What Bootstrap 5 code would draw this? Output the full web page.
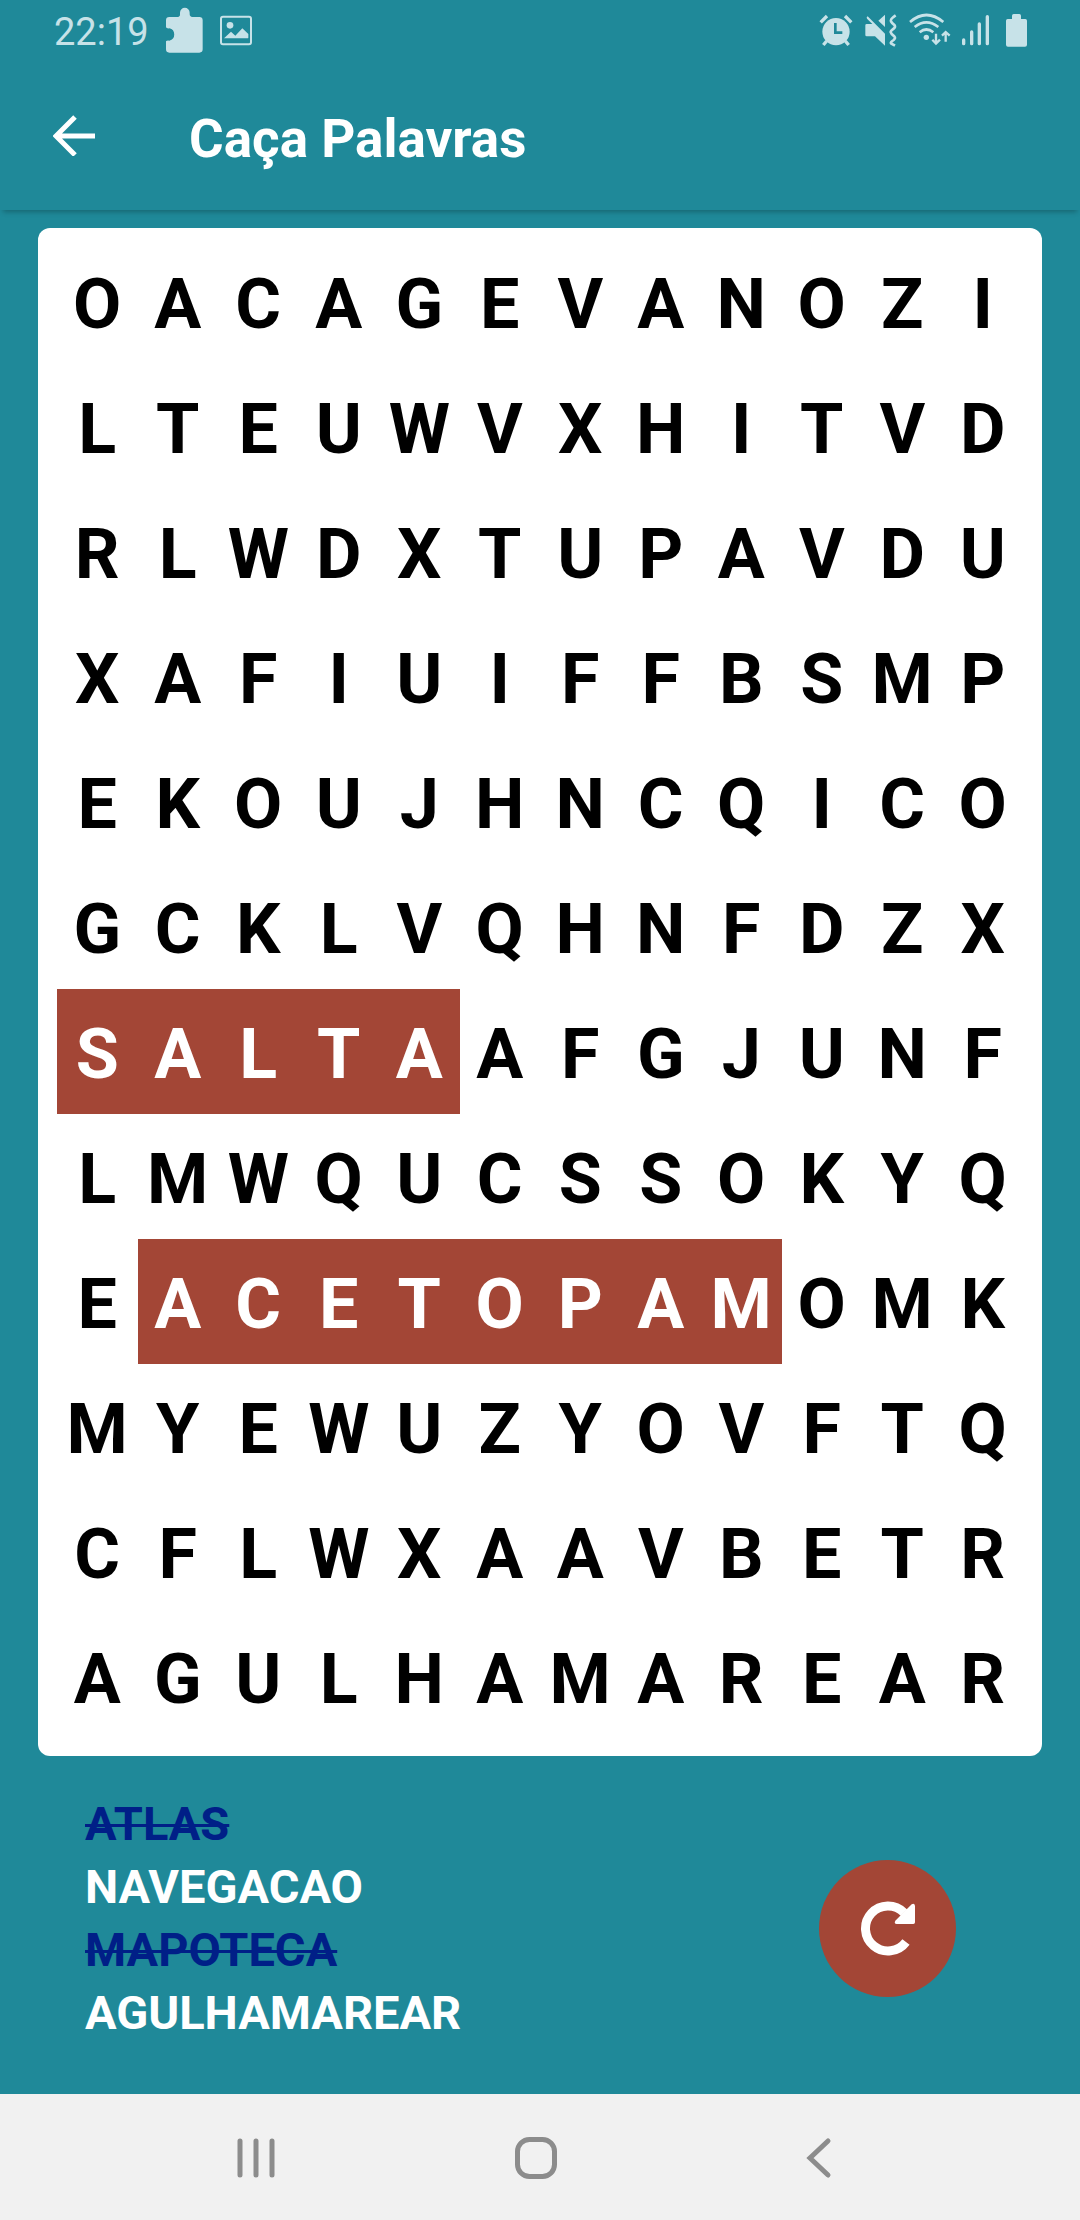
<!DOCTYPE html>
<html lang="pt-BR">
<head>
<meta charset="utf-8">
<meta name="viewport" content="width=device-width, initial-scale=1">
<title>Caça Palavras</title>
<link rel="stylesheet" href="https://cdn.jsdelivr.net/npm/bootstrap@5.3.0/dist/css/bootstrap.min.css">
<style>
  body { background: #1f8999; font-family: Roboto, "Liberation Sans", sans-serif; }
  svg { display: block; }
  .status-bar { height: 60px; padding: 0 52px 0 54px; color: #c7e2e8; }
  .status-time { font-size: 38px; line-height: 54px; padding-top: 4px; }
  .status-icons { gap: 10px; }
  .status-left { gap: 17px; }
  .app-bar { height: 150px; padding: 0 53px; gap: 94px; box-shadow: 0 5px 5px -3px rgba(0, 0, 0, .25); }
  .app-title { font-size: 53px; line-height: 64px; padding-top: 8px; }
  .board { margin: 18px 38px 0; padding: 11px 19px 17px; border-radius: 12px; }
  .letter { font-size: 70px; line-height: 119px; padding-top: 6px; font-weight: 700; text-align: center; color: #000; }
  .found { background: #a34636; color: #fff; }
  .word-area { padding: 36px 124px 50px 85px; }
  .word-list { font-size: 47px; line-height: 63px; font-weight: 700; }
  .word-list del { color: #001f87; text-decoration-thickness: 3px; }
  .restart { width: 137px; height: 137px; margin-top: 20px; background: #a34636; }
  .system-nav { height: 126px; background: #f1f1f1; color: #8c8c8c; padding: 2px 8px 0 0; }
  .system-nav .btn { width: 26%; color: inherit; }
</style>
<script src="https://cdn.jsdelivr.net/npm/bootstrap@5.3.0/dist/js/bootstrap.bundle.min.js"></script>
</head>
<body class="min-vh-100 d-flex flex-column">

<div class="status-bar d-flex justify-content-between align-items-center">
  <div class="status-left d-flex align-items-center">
    <div class="status-time">22:19</div>
    <svg width="37" height="47" viewBox="411 21 111 141" fill="currentColor" aria-hidden="true"><path d="M421 51H446Q454 50 453 42V38A14.500 14.500 0 0 1 482 38V42Q482 50 490 51H511Q521 51 521 61V148Q521 158 511 158H421Q411 158 411 148V124Q413 121 421 122A19 19 0 0 0 421 85Q413 86 411 82V61Q411 51 421 51Z"/></svg>
    <svg width="32" height="36" viewBox="570 36 96 108" aria-hidden="true"><rect x="573" y="50" width="90" height="83" rx="6" fill="none" stroke="currentColor" stroke-width="6"/><circle cx="600" cy="76" r="10" fill="currentColor"/><path d="M582 115L603 95L616 107L637 85L655 102V113Q655 115 652 115Z" fill="currentColor"/></svg>
  </div>
  <div class="status-icons d-flex align-items-center">
    <svg width="36" height="36" viewBox="54 36 108 108" fill="none" stroke="currentColor" aria-hidden="true"><circle cx="108" cy="95" r="41" fill="currentColor" stroke="none"/><path d="M62 67L81 48M135 48L154 67" stroke-width="10"/><path d="M80 123L70 135M136 123L146 135" stroke-width="10"/><path d="M106 69V98H127" stroke="#1f8999" stroke-width="8"/></svg>
    <svg width="34" height="36" viewBox="192 36 102 108" fill="currentColor" aria-hidden="true"><path d="M196 76Q196 72 200 72H217L201 56Q198 51 203 49L255 101V137L225 109H200Q196 109 196 105ZM235 62L255 44V81Z"/><path d="M287 46Q270 57 273 64Q275 68 284 76Q287 81 281 86Q271 93 272 97Q273 102 283 109Q288 114 281 120Q270 127 273 130L285 137" fill="none" stroke="currentColor" stroke-width="8"/></svg>
    <svg width="43" height="36" viewBox="324 36 129 108" fill="none" stroke="currentColor" aria-hidden="true"><path d="M330 66Q379 24 430 66M344 81Q379 53 415 81M359 97Q379 80 400 97" stroke-width="8"/><circle cx="379" cy="112" r="8" fill="currentColor" stroke="none"/><path d="M408 101V131M397 119L408 131L420 119M437 125V96M426 107L437 96L449 107" stroke-width="7"/></svg>
    <svg width="29" height="36" viewBox="483 36 87 108" stroke="currentColor" stroke-width="10" stroke-linecap="round" aria-hidden="true"><path d="M491 120V131M515 96V131M538 72V131M562 50V131"/></svg>
    <svg width="28" height="36" viewBox="600 36 84 108" fill="currentColor" aria-hidden="true"><path d="M623 57H636V47Q636 42 641 42H658Q663 42 663 47V57H676Q681 57 681 62V134Q681 140 675 140H624Q618 140 618 134V62Q618 57 623 57Z"/></svg>
  </div>
</div>

<header class="app-bar d-flex align-items-center text-white">
  <button type="button" class="btn p-0 border-0 text-white" aria-label="Voltar">
    <svg width="42" height="42" viewBox="0 0 42 42" fill="none" stroke="currentColor" stroke-width="5"><path d="M42 22H4M22 3L3 22L22 41"/></svg>
  </button>
  <h1 class="app-title fw-bold m-0">Caça Palavras</h1>
</header>

<main class="flex-grow-1">
  <section class="board bg-white">
    <div class="row g-0"><div class="col letter">O</div><div class="col letter">A</div><div class="col letter">C</div><div class="col letter">A</div><div class="col letter">G</div><div class="col letter">E</div><div class="col letter">V</div><div class="col letter">A</div><div class="col letter">N</div><div class="col letter">O</div><div class="col letter">Z</div><div class="col letter">I</div></div>
    <div class="row g-0"><div class="col letter">L</div><div class="col letter">T</div><div class="col letter">E</div><div class="col letter">U</div><div class="col letter">W</div><div class="col letter">V</div><div class="col letter">X</div><div class="col letter">H</div><div class="col letter">I</div><div class="col letter">T</div><div class="col letter">V</div><div class="col letter">D</div></div>
    <div class="row g-0"><div class="col letter">R</div><div class="col letter">L</div><div class="col letter">W</div><div class="col letter">D</div><div class="col letter">X</div><div class="col letter">T</div><div class="col letter">U</div><div class="col letter">P</div><div class="col letter">A</div><div class="col letter">V</div><div class="col letter">D</div><div class="col letter">U</div></div>
    <div class="row g-0"><div class="col letter">X</div><div class="col letter">A</div><div class="col letter">F</div><div class="col letter">I</div><div class="col letter">U</div><div class="col letter">I</div><div class="col letter">F</div><div class="col letter">F</div><div class="col letter">B</div><div class="col letter">S</div><div class="col letter">M</div><div class="col letter">P</div></div>
    <div class="row g-0"><div class="col letter">E</div><div class="col letter">K</div><div class="col letter">O</div><div class="col letter">U</div><div class="col letter">J</div><div class="col letter">H</div><div class="col letter">N</div><div class="col letter">C</div><div class="col letter">Q</div><div class="col letter">I</div><div class="col letter">C</div><div class="col letter">O</div></div>
    <div class="row g-0"><div class="col letter">G</div><div class="col letter">C</div><div class="col letter">K</div><div class="col letter">L</div><div class="col letter">V</div><div class="col letter">Q</div><div class="col letter">H</div><div class="col letter">N</div><div class="col letter">F</div><div class="col letter">D</div><div class="col letter">Z</div><div class="col letter">X</div></div>
    <div class="row g-0"><div class="col letter found">S</div><div class="col letter found">A</div><div class="col letter found">L</div><div class="col letter found">T</div><div class="col letter found">A</div><div class="col letter">A</div><div class="col letter">F</div><div class="col letter">G</div><div class="col letter">J</div><div class="col letter">U</div><div class="col letter">N</div><div class="col letter">F</div></div>
    <div class="row g-0"><div class="col letter">L</div><div class="col letter">M</div><div class="col letter">W</div><div class="col letter">Q</div><div class="col letter">U</div><div class="col letter">C</div><div class="col letter">S</div><div class="col letter">S</div><div class="col letter">O</div><div class="col letter">K</div><div class="col letter">Y</div><div class="col letter">Q</div></div>
    <div class="row g-0"><div class="col letter">E</div><div class="col letter found">A</div><div class="col letter found">C</div><div class="col letter found">E</div><div class="col letter found">T</div><div class="col letter found">O</div><div class="col letter found">P</div><div class="col letter found">A</div><div class="col letter found">M</div><div class="col letter">O</div><div class="col letter">M</div><div class="col letter">K</div></div>
    <div class="row g-0"><div class="col letter">M</div><div class="col letter">Y</div><div class="col letter">E</div><div class="col letter">W</div><div class="col letter">U</div><div class="col letter">Z</div><div class="col letter">Y</div><div class="col letter">O</div><div class="col letter">V</div><div class="col letter">F</div><div class="col letter">T</div><div class="col letter">Q</div></div>
    <div class="row g-0"><div class="col letter">C</div><div class="col letter">F</div><div class="col letter">L</div><div class="col letter">W</div><div class="col letter">X</div><div class="col letter">A</div><div class="col letter">A</div><div class="col letter">V</div><div class="col letter">B</div><div class="col letter">E</div><div class="col letter">T</div><div class="col letter">R</div></div>
    <div class="row g-0"><div class="col letter">A</div><div class="col letter">G</div><div class="col letter">U</div><div class="col letter">L</div><div class="col letter">H</div><div class="col letter">A</div><div class="col letter">M</div><div class="col letter">A</div><div class="col letter">R</div><div class="col letter">E</div><div class="col letter">A</div><div class="col letter">R</div></div>
  </section>

  <section class="word-area d-flex justify-content-between align-items-center">
    <ul class="word-list list-unstyled text-white m-0">
      <li><del>ATLAS</del></li>
      <li>NAVEGACAO</li>
      <li><del>MAPOTECA</del></li>
      <li>AGULHAMAREAR</li>
    </ul>
    <button type="button" class="restart btn rounded-circle p-0 border-0 text-white d-flex align-items-center justify-content-center" aria-label="Reiniciar">
      <svg width="56" height="56" viewBox="237 240 168 168"><path d="M369 278A67.500 67.500 0 1 0 375 366" fill="none" stroke="currentColor" stroke-width="27"/><path d="M402 257V307Q402 312 397 312H347Q338 310 343 302L392 253Q400 248 402 257Z" fill="currentColor"/></svg>
    </button>
  </section>
</main>

<nav class="system-nav d-flex justify-content-center align-items-center" aria-label="Sistema">
  <button type="button" class="btn d-flex justify-content-center border-0" aria-label="Recentes"><svg width="44" height="44" viewBox="0 0 44 44" stroke="currentColor" stroke-width="5" stroke-linecap="round"><path d="M5 5V39M21 5V39M37 5V39"/></svg></button>
  <button type="button" class="btn d-flex justify-content-center border-0" aria-label="Início"><svg width="44" height="44" viewBox="0 0 44 44" fill="none" stroke="currentColor" stroke-width="5"><rect x="3.500" y="3.500" width="37" height="37" rx="12"/></svg></button>
  <button type="button" class="btn d-flex justify-content-center border-0" aria-label="Voltar"><svg width="44" height="44" viewBox="0 0 44 44" fill="none" stroke="currentColor" stroke-width="5" stroke-linecap="round"><path d="M35 5L17 22L35 39"/></svg></button>
</nav>

</body>
</html>
